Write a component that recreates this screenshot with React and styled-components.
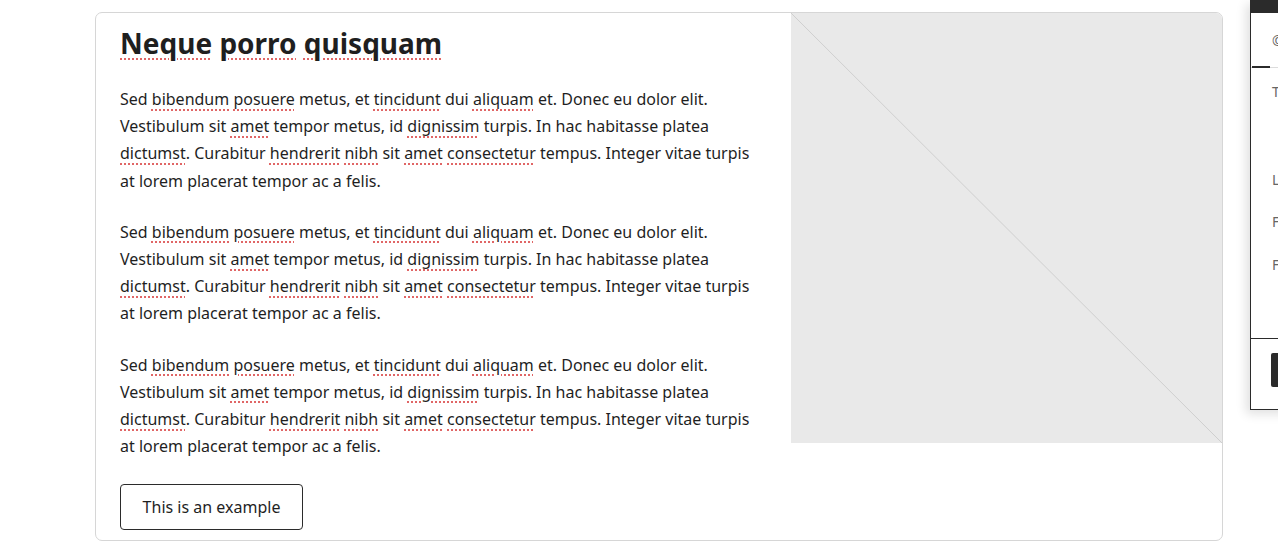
import React from "react";
import styled, { createGlobalStyle } from "styled-components";

const Global = createGlobalStyle`
  html, body {
    margin: 0;
    padding: 0;
    background: #ffffff;
    overflow: hidden;
  }
  body {
    font-family: "Noto Sans", "Open Sans", sans-serif;
    color: #1f1f1f;
  }
`;

const Page = styled.div`
  position: relative;
  width: 1278px;
  height: 550px;
  padding: 12px 0 0 95px;
  box-sizing: border-box;
`;

const Card = styled.div`
  width: 1128px;
  height: 529px;
  box-sizing: border-box;
  border: 1px solid #d6d6d6;
  border-radius: 7px;
  display: flex;
  overflow: hidden;
`;

const Content = styled.div`
  flex: 1;
  padding: 12px 24px 10px 24px;
  display: flex;
  flex-direction: column;
`;

const Title = styled.h1`
  margin: 0 0 25px 0;
  font-size: 28px;
  line-height: 36px;
  font-weight: 700;
  color: #1f1f1f;
`;

const Paragraph = styled.p`
  margin: 0 0 24px 0;
  font-size: 16px;
  line-height: 27.2px;
  color: #1f1f1f;
`;

const Misspelled = styled.span`
  text-decoration: underline dotted #e06666;
  text-decoration-thickness: 1.5px;
  text-underline-offset: 4px;
`;

const Button = styled.button`
  align-self: flex-start;
  font-family: "Noto Sans", sans-serif;
  font-size: 16px;
  color: #1f1f1f;
  background: #fff;
  border: 1px solid #2b2b2b;
  border-radius: 4px;
  width: 183px;
  height: 46px;
  padding: 0;
`;

const Media = styled.div`
  width: 431px;
  height: 430px;
  flex-shrink: 0;
  background: #e9e9e9;
`;

const Panel = styled.div`
  position: absolute;
  left: 1250px;
  top: 0;
  width: 320px;
  height: 410px;
  box-sizing: border-box;
  background: #fff;
  border: 1px solid #2b2b2b;
  border-top: none;
  box-shadow: -4px 4px 10px rgba(0, 0, 0, 0.12);
  display: flex;
  flex-direction: column;
  font-size: 14px;
  color: #666;
`;

const PanelBar = styled.div`
  height: 13px;
  background: #2b2b2b;
`;

const PanelTabs = styled.div`
  height: 54px;
  display: flex;
  align-items: center;
  padding-left: 21px;
  border-bottom: 1px solid #dcdcdc;
  position: relative;
  &::after {
    content: "";
    position: absolute;
    left: 1px;
    bottom: -1px;
    width: 18px;
    height: 2px;
    background: #2b2b2b;
  }
`;

const PanelBody = styled.div`
  flex: 1;
  padding: 14px 0 0 21px;
  display: flex;
  flex-direction: column;
  border-bottom: 1px solid #2b2b2b;
`;

const Field = styled.div`
  height: ${(p) => p.h}px;
  line-height: 20px;
`;

const PanelFooter = styled.div`
  height: 70px;
  padding: 14px 0 0 20px;
  box-sizing: border-box;
`;

const DarkButton = styled.div`
  width: 120px;
  height: 34px;
  background: #2b2b2b;
  border-radius: 2px;
`;

const words = (text) =>
  text.split(/(\[[^\]]+\])/).map((part, i) =>
    part.startsWith("[") ? (
      <Misspelled key={i}>{part.slice(1, -1)}</Misspelled>
    ) : (
      part
    )
  );

const body =
  "Sed [bibendum] [posuere] metus, et [tincidunt] dui [aliquam] et. Donec eu dolor elit. Vestibulum sit [amet] tempor metus, id [dignissim] turpis. In hac habitasse platea [dictumst]. Curabitur [hendrerit] [nibh] sit [amet] [consectetur] tempus. Integer vitae turpis at lorem placerat tempor ac a felis.";

const App = () => {
  return (
    <Page>
      <Global />
      <Card>
        <Content>
          <Title>
            <Misspelled>Neque</Misspelled> <Misspelled>porro</Misspelled>{" "}
            <Misspelled>quisquam</Misspelled>
          </Title>
          <Paragraph>{words(body)}</Paragraph>
          <Paragraph>{words(body)}</Paragraph>
          <Paragraph>{words(body)}</Paragraph>
          <Button>This is an example</Button>
        </Content>
        <Media>
          <svg width="431" height="430" viewBox="0 0 431 430">
            <line x1="0" y1="0" x2="431" y2="430" stroke="#cfcfcf" strokeWidth="1" />
          </svg>
        </Media>
      </Card>
      <Panel>
        <PanelBar />
        <PanelTabs>©</PanelTabs>
        <PanelBody>
          <Field h={88}>Title</Field>
          <Field h={42}>Link</Field>
          <Field h={43}>Font</Field>
          <Field h={60}>Fill</Field>
        </PanelBody>
        <PanelFooter>
          <DarkButton />
        </PanelFooter>
      </Panel>
    </Page>
  );
};

export default App;
